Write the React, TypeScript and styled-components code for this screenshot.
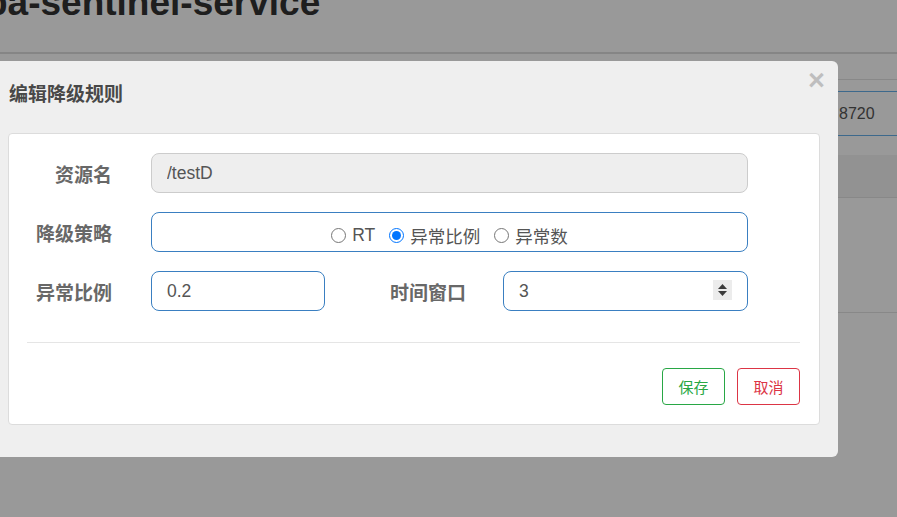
import * as React from "react";
import styled, { createGlobalStyle } from "styled-components";

const FONT = `"Liberation Sans", "Noto Sans CJK SC", sans-serif`;

const GlobalStyle = createGlobalStyle`
  html, body {
    margin: 0;
    padding: 0;
    background: #fff;
    overflow: hidden;
    font-family: ${FONT};
  }
  * {
    box-sizing: border-box;
  }
`;

// ---- page behind the dialog ----

const Page = styled.div`
  width: 897px;
  height: 517px;
  overflow: hidden;
`;

const Header = styled.div`
  padding-bottom: 29px;
  border-bottom: 2px solid #dedede;
`;

const PageTitle = styled.h1`
  margin: -18px 0 0 -15px;
  font-size: 37px;
  line-height: 41px;
  font-weight: bold;
  color: #333;
  white-space: nowrap;
`;

const Section = styled.div`
  margin-top: 25px;
  border-top: 1px solid #e3e3e3;
`;

const FieldRow = styled.div`
  margin-top: 11px;
  height: 45px;
  border-top: 1px solid #66afe9;
  border-bottom: 1px solid #66afe9;
  display: flex;
  justify-content: flex-end;
  align-items: center;
`;

const FieldValue = styled.span`
  width: 58px;
  font-size: 16px;
  color: #555;
`;

const Band = styled.div`
  margin-top: 19px;
  height: 43px;
  background: #f3f3f3;
  border-bottom: 1px solid #e3e3e3;
`;

const TableBody = styled.div`
  height: 115px;
  border-bottom: 1px solid #e3e3e3;
`;

const Backdrop = styled.div`
  position: fixed;
  inset: 0;
  background: rgba(0, 0, 0, 0.4);
`;

// ---- dialog ----

const Dialog = styled.div`
  position: fixed;
  top: 61px;
  left: -12px;
  width: 850px;
  background: #efefef;
  border-radius: 6px;
  padding-bottom: 32px;
`;

const DialogHeader = styled.div`
  padding: 20px 21px 25px;
`;

const DialogTitle = styled.div`
  font-size: 19px;
  line-height: 27px;
  font-weight: bold;
  color: #484848;
`;

const Close = styled.span`
  position: absolute;
  top: 5px;
  right: 13px;
  font-size: 29px;
  line-height: 29px;
  font-weight: bold;
  color: #000;
  opacity: 0.2;
`;

const Panel = styled.div`
  margin: 0 18px 0 20px;
  background: #fff;
  border: 1px solid #dcdcdc;
  border-radius: 4px;
  padding: 19px 19px 19px 18px;
`;

const Form = styled.div`
  display: grid;
  grid-template-columns: 85px 597px;
  column-gap: 39px;
  row-gap: 19px;
`;

const Label = styled.label`
  align-self: center;
  text-align: right;
  padding-top: 1px;
  font-size: 19px;
  font-weight: bold;
  color: #686868;
  white-space: nowrap;
`;

const Input = styled.input<{ $width?: number }>`
  width: ${(p) => (p.$width ? `${p.$width}px` : "100%")};
  height: 40px;
  padding: 0 15px;
  border: 1px solid #3a7fc1;
  border-radius: 8px;
  background: #fff;
  font-family: ${FONT};
  font-size: 17.5px;
  color: #555;
  outline: none;

  &:disabled {
    background: #eee;
    border-color: #ccc;
    color: #555;
    -webkit-text-fill-color: #555;
  }
`;

const RadioBox = styled.div`
  height: 40px;
  border: 1px solid #3a7fc1;
  border-radius: 8px;
  display: flex;
  justify-content: center;
  align-items: center;
  gap: 14px;
  padding-top: 6px;
`;

const RadioItem = styled.label`
  display: flex;
  align-items: center;
  font-size: 17.5px;
  color: #555;

  input {
    margin: 0 6px 0 0;
    width: 15px;
    height: 15px;
  }
`;

const PairRow = styled.div`
  display: grid;
  grid-template-columns: 174px 1fr 245px;
  column-gap: 37px;
`;

const NumberWrap = styled.div`
  position: relative;
`;

const Spinner = styled.span`
  position: absolute;
  top: 9px;
  right: 16px;
  width: 19px;
  height: 20px;
  background: #ececec;
  display: flex;
  align-items: center;
  justify-content: center;
`;

const Divider = styled.hr`
  margin: 31px 0 0;
  border: 0;
  border-top: 1px solid #e5e5e5;
`;

const Actions = styled.div`
  display: flex;
  justify-content: flex-end;
  gap: 12px;
  margin-top: 25px;
`;

const Button = styled.button<{ $tone: string }>`
  width: 63px;
  height: 37px;
  border: 1px solid ${(p) => p.$tone};
  border-radius: 4px;
  background: #fff;
  color: ${(p) => p.$tone};
  font-family: ${FONT};
  font-size: 15px;
  padding: 0;
`;

export default function App() {
  return (
    <>
      <GlobalStyle />
      <Page>
        <Header>
          <PageTitle>ba-sentinel-service</PageTitle>
        </Header>
        <Section>
          <FieldRow>
            <FieldValue>8720</FieldValue>
          </FieldRow>
          <Band />
          <TableBody />
        </Section>
      </Page>
      <Backdrop />
      <Dialog>
        <DialogHeader>
          <DialogTitle>编辑降级规则</DialogTitle>
        </DialogHeader>
        <Close>×</Close>
        <Panel>
          <Form>
            <Label>资源名</Label>
            <Input disabled defaultValue="/testD" />

            <Label>降级策略</Label>
            <RadioBox>
              <RadioItem>
                <input type="radio" name="grade" value="0" />
                RT
              </RadioItem>
              <RadioItem>
                <input type="radio" name="grade" value="1" defaultChecked />
                异常比例
              </RadioItem>
              <RadioItem>
                <input type="radio" name="grade" value="2" />
                异常数
              </RadioItem>
            </RadioBox>

            <Label>异常比例</Label>
            <PairRow>
              <Input defaultValue="0.2" />
              <Label>时间窗口</Label>
              <NumberWrap>
                <Input defaultValue="3" />
                <Spinner>
                  <svg width="11" height="16" viewBox="0 0 11 16">
                    <path d="M5.5 2 L10 7 L1 7 Z" fill="#3c3c3c" />
                    <path d="M1 9 L10 9 L5.5 14 Z" fill="#3c3c3c" />
                  </svg>
                </Spinner>
              </NumberWrap>
            </PairRow>
          </Form>
          <Divider />
          <Actions>
            <Button $tone="#28a745">保存</Button>
            <Button $tone="#dc3545">取消</Button>
          </Actions>
        </Panel>
      </Dialog>
    </>
  );
}
